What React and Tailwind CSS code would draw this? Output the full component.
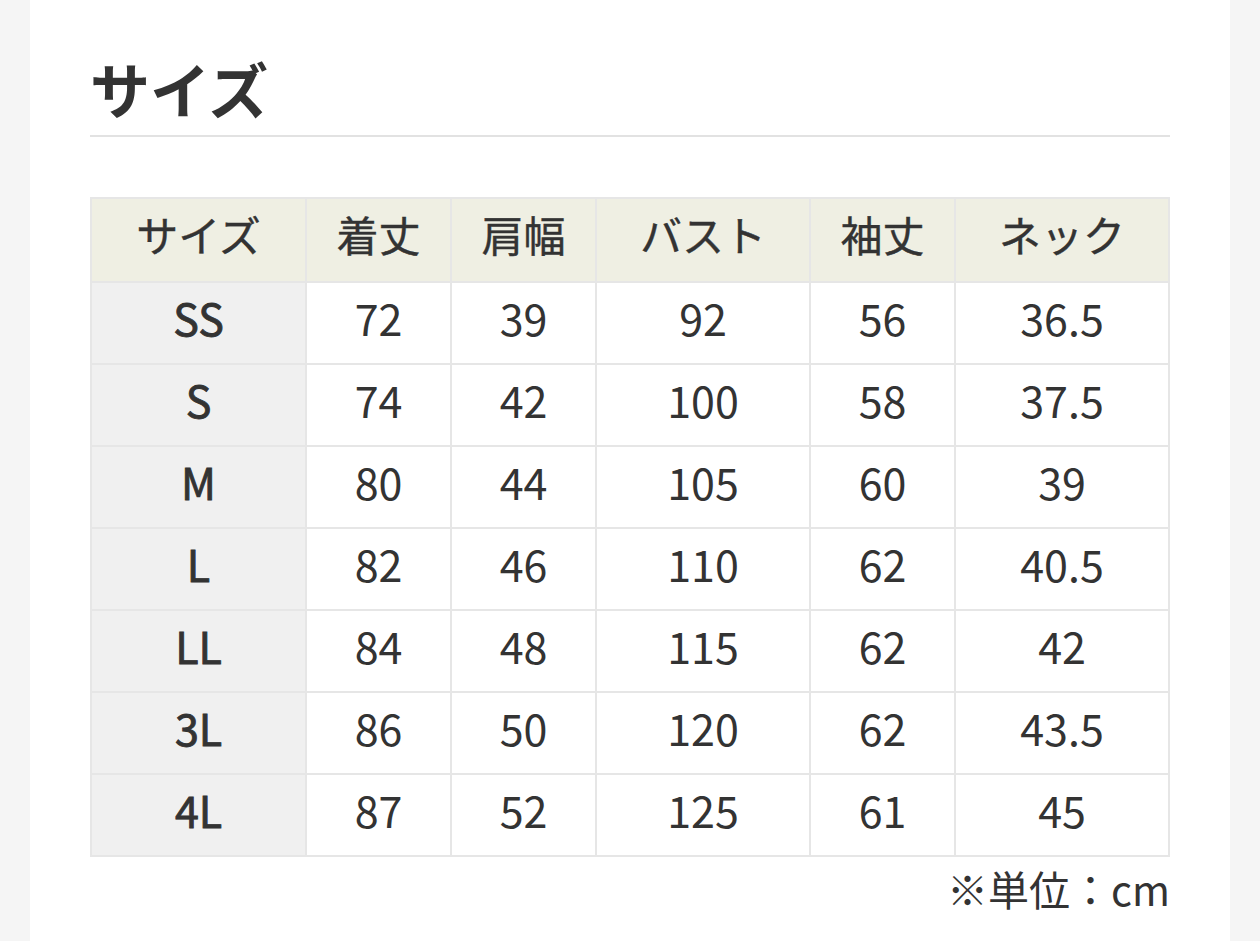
const rows = [
  ["SS", "72", "39", "92", "56", "36.5"],
  ["S", "74", "42", "100", "58", "37.5"],
  ["M", "80", "44", "105", "60", "39"],
  ["L", "82", "46", "110", "62", "40.5"],
  ["LL", "84", "48", "115", "62", "42"],
  ["3L", "86", "50", "120", "62", "43.5"],
  ["4L", "87", "52", "125", "61", "45"],
];
const heads = ["サイズ", "着丈", "肩幅", "バスト", "袖丈", "ネック"];
const widths = ["w-[215px]", "w-[145px]", "w-[145px]", "w-[214px]", "w-[145px]", "w-[214px]"];

export default function App() {
  return (
    <div
      className="min-h-screen bg-[#f5f5f5] px-[30px] text-[#333]"
      style={{ fontFamily: '"Noto Sans CJK JP", "Noto Sans", sans-serif' }}
    >
      <div className="min-h-[941px] bg-white px-[60px] pt-[56px]">
        <h2 className="border-b-2 border-[#e2e2e2] pb-[15px] text-[60px] font-bold leading-[64px]">
          サイズ
        </h2>
        <table className="mt-[60px] w-[1078px] table-fixed border-collapse border-2 border-[#e6e6e6]">
          <colgroup>
            {widths.map((w, i) => (
              <col key={i} className={w} />
            ))}
          </colgroup>
          <thead>
            <tr className="h-[84px] bg-[#efefe3]">
              {heads.map((h, i) => (
                <th
                  key={i}
                  className="border-2 border-[#e6e6e6] p-0 pb-[12px] text-center text-[42px] font-normal leading-none [-webkit-text-stroke:0.4px_#333]"
                >
                  {h}
                </th>
              ))}
            </tr>
          </thead>
          <tbody>
            {rows.map((r, ri) => (
              <tr key={ri} className="h-[82px]">
                {r.map((c, ci) => (
                  <td
                    key={ci}
                    className={
                      ci === 0
                        ? "border-2 border-[#e6e6e6] bg-[#f0f0f0] p-0 pb-[12px] text-center text-[43px] font-normal leading-none [-webkit-text-stroke:0.9px_#333]"
                        : "border-2 border-[#e6e6e6] bg-white p-0 pb-[12px] text-center text-[43px] font-normal leading-none"
                    }
                  >
                    {c}
                  </td>
                ))}
              </tr>
            ))}
          </tbody>
        </table>
        <p className="mt-[6px] w-[1080px] text-right text-[41px] leading-[50px]">※単位：cm</p>
      </div>
    </div>
  );
}
